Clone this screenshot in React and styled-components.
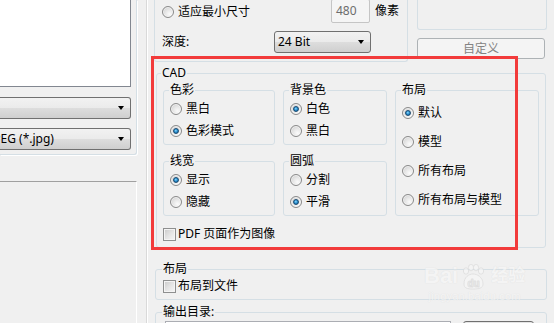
import React from 'react';
import styled, { createGlobalStyle, css } from 'styled-components';

// ========== Global ==========
const GlobalStyle = createGlobalStyle`
  html, body {
    margin: 0;
    padding: 0;
    background: #f0f0f0;
  }
  body {
    font-family: 'Noto Sans', 'Noto Sans CJK SC', sans-serif;
    font-size: 12px;
    color: #000;
  }
`;

// ========== Frame ==========
const Screen = styled.div`
  position: relative;
  width: 554px;
  height: 323px;
  overflow: hidden;
  display: flex;
  background: #f0f0f0;
  line-height: 14px;
`;

const LeftPanel = styled.div`
  width: 147px;
  flex: none;
  box-sizing: border-box;
  border-right: 1px solid #d9d9d9;
  display: flex;
  flex-direction: column;
`;

const LeftGroup = styled.div`
  width: 137px;
  height: 155px;
  box-sizing: border-box;
  border-right: 1px solid #d5dfe5;
  border-bottom: 1px solid #d5dfe5;
  border-bottom-right-radius: 3px;
  box-shadow: 1px 1px 0 #fff;
  display: flex;
  flex-direction: column;
  gap: 9px;
`;

const ListBox = styled.div`
  width: 131px;
  height: 87px;
  box-sizing: border-box;
  background: #fff;
  border-right: 1px solid #828790;
  border-bottom: 1px solid #828790;
  margin-bottom: 1px;
`;

const SunkenPanel = styled.div`
  margin-top: 26px;
  width: 137px;
  flex: 1;
  box-sizing: border-box;
  border-top: 1px solid #a0a0a0;
  border-right: 1px solid #fff;
`;

const MainPanel = styled.div`
  flex: 1;
  border-left: 1px solid #fff;
  padding: 0 7px 0 7px;
  display: flex;
  flex-direction: column;
  min-width: 0;
`;

// ========== Controls ==========
const Combo = styled.div`
  width: ${p => p.$w}px;
  height: 22px;
  box-sizing: border-box;
  border: 1px solid #707070;
  border-radius: 3px;
  ${p => p.$cut && css`
    border-left: none;
    border-top-left-radius: 0;
    border-bottom-left-radius: 0;
  `}
  background: linear-gradient(#f2f2f2 0%, #ebebeb 48%, #dddddd 52%, #cfcfcf 100%);
  display: flex;
  align-items: center;
  padding-left: 3px;
  padding-right: 6px;
  white-space: nowrap;
  overflow: hidden;
`;

const ComboText = styled.span`
  flex: 1;
  margin-left: ${p => p.$shift || 0}px;
`;

const Arrow = styled.span`
  flex: none;
  width: 0;
  height: 0;
  border-left: 3.5px solid transparent;
  border-right: 3.5px solid transparent;
  border-top: 4px solid #000;
`;

const Radio = styled.span`
  position: relative;
  flex: none;
  width: 12px;
  height: 12px;
  box-sizing: border-box;
  border-radius: 50%;
  border: 1px solid #8a8a8a;
  background: radial-gradient(circle at 65% 70%, #fbfbfb 0%, #e6e6e6 45%, #c8c8c8 100%);
  box-shadow: inset 0 0 0 1px rgba(255, 255, 255, 0.6);
  ${p => p.$checked && css`
    &::after {
      content: '';
      position: absolute;
      left: 2px;
      top: 2px;
      width: 6px;
      height: 6px;
      border-radius: 50%;
      box-sizing: border-box;
      border: 1px solid #19496f;
      background: radial-gradient(circle at 45% 40%, #8fdcff 0%, #2d93d3 45%, #0f5a92 100%);
    }
  `}
`;

const Check = styled.span`
  flex: none;
  width: 13px;
  height: 13px;
  box-sizing: border-box;
  border: 1px solid #8e8f8f;
  background: linear-gradient(135deg, #c9c9c9 0%, #e4e4e4 50%, #f6f6f6 100%);
  box-shadow: inset 0 0 0 1px #f4f4f4;
`;

const Option = styled.label`
  display: flex;
  align-items: center;
  gap: ${p => (p.$box ? 2 : 4)}px;
  height: 18px;
  white-space: nowrap;
  width: ${p => (p.$w ? `${p.$w}px` : 'auto')};
`;

const TextBox = styled.div`
  width: 39px;
  height: 24px;
  margin-top: -1px;
  box-sizing: border-box;
  border: 1px solid #c5c5c5;
  border-radius: 2px;
  background: #f5f5f5;
  color: #6d6d6d;
  display: flex;
  align-items: center;
  padding-left: 4px;
`;

const Button = styled.div`
  height: 21px;
  box-sizing: border-box;
  border: 1px solid #adb2b5;
  border-radius: 3px;
  background: #f4f4f4;
  color: #838383;
  display: flex;
  align-items: center;
  justify-content: center;
  width: ${p => p.$w}px;
`;

// ========== Top area ==========
const TopArea = styled.div`
  display: flex;
  height: 62px;
  flex: none;
  margin-left: -1px;
`;

const TopGroup = styled.div`
  width: 256px;
  height: 62px;
  box-sizing: border-box;
  border: 1px solid #d5dfe5;
  border-top: none;
  border-radius: 0 0 3px 3px;
  padding-left: 7px;
  display: flex;
  flex-direction: column;
  gap: 8px;
`;

const FieldRow = styled.div`
  display: flex;
  align-items: center;
  height: ${p => p.$h}px;
`;

const Unit = styled.span`
  margin-left: 5px;
  align-self: flex-start;
  margin-top: 4px;
`;

const FieldLabel = styled.span`
  width: 112px;
`;

const SideColumn = styled.div`
  margin-left: 9px;
  display: flex;
  flex-direction: column;
  gap: 8px;
`;

const SideBox = styled.div`
  width: 130px;
  height: 30px;
  box-sizing: border-box;
  border: 1px solid #d5dfe5;
  border-top: none;
  border-radius: 0 0 3px 3px;
`;

// ========== Group boxes ==========
const Group = styled.fieldset`
  margin: ${p => p.$m || '0'};
  padding: ${p => p.$p || '0 6px'};
  border: 1px solid #d5dfe5;
  border-radius: 3px;
  min-width: 0;
  ${p => p.$span && css`grid-row: span 2;`}
`;

const Legend = styled.legend`
  padding: 0 1px;
  margin-left: ${p => p.$ml ?? -1}px;
  line-height: 14px;
`;

const CadGrid = styled.div`
  display: grid;
  grid-template-columns: 112px 104px 144px;
  column-gap: 8px;
  row-gap: 9px;
  padding-top: 3px;
`;

const OptionList = styled.div`
  display: flex;
  flex-direction: column;
  gap: ${p => p.$gap}px;
  padding: ${p => p.$pt}px 0 4px;
`;

const PdfRow = styled.div`
  margin-top: 9px;
  padding-bottom: 4px;
`;

const OutRow = styled.div`
  display: flex;
  gap: 12px;
  padding: 2px 0 0 2px;
`;

const OutInput = styled.div`
  width: 286px;
  height: 20px;
  box-sizing: border-box;
  border: 1px solid #abadb3;
  background: #fff;
`;

const OutButton = styled.div`
  width: 71px;
  height: 20px;
  box-sizing: border-box;
  border: 1px solid #707070;
  border-radius: 3px;
  background: #e5e5e5;
`;

// ========== Overlays ==========
const Highlight = styled.div`
  position: absolute;
  left: 151px;
  top: 56px;
  width: 367px;
  height: 194px;
  box-sizing: border-box;
  border: 3px solid #f23b3b;
  pointer-events: none;
`;

const Watermark = styled.div`
  position: absolute;
  left: 424px;
  top: 264px;
  display: flex;
  flex-direction: column;
  align-items: center;
  color: #f7f7f7;
  opacity: 0.7;
  text-shadow: 0 0 1px #d6d6d6;
  font-family: 'Liberation Sans', 'Noto Sans CJK SC', sans-serif;
  pointer-events: none;
`;

const MarkTop = styled.div`
  display: flex;
  align-items: flex-end;
  font-size: 22px;
  font-weight: bold;
  line-height: 24px;
`;

const MarkCn = styled.span`
  font-size: 17px;
  margin-left: 3px;
`;

const MarkUrl = styled.div`
  font-size: 11px;
  line-height: 12px;
  margin-top: 2px;
  letter-spacing: 0.2px;
`;

const Paw = () => (
  <svg width="28" height="26" viewBox="0 0 28 26" style={{ margin: '0 1px -2px' }}>
    <g fill="#f7f7f7" stroke="#d6d6d6" strokeWidth="0.8">
      <ellipse cx="7" cy="7" rx="2.6" ry="3.2" />
      <ellipse cx="12" cy="3.6" rx="2.6" ry="3.2" />
      <ellipse cx="17" cy="3.6" rx="2.6" ry="3.2" />
      <ellipse cx="22" cy="7" rx="2.6" ry="3.2" />
      <path d="M5 20 C5 13 10 10 14 10 C18 10 24 13 24 20 C24 24 20 25 14 25 C8 25 5 24 5 20 Z" />
    </g>
    <text x="14.5" y="22.5" textAnchor="middle" fontSize="10" fontWeight="bold"
      fill="#f7f7f7" stroke="#d6d6d6" strokeWidth="0.5" fontFamily="Liberation Sans, sans-serif">du</text>
  </svg>
);

// ========== Main Component ==========
const App = () => {
  return (
    <>
      <GlobalStyle />
      <Screen>
        <LeftPanel>
          <LeftGroup>
            <ListBox />
            <Combo $w={131} $cut>
              <ComboText />
              <Arrow />
            </Combo>
            <Combo $w={131} $cut>
              <ComboText $shift={-13}>JPEG (*.jpg)</ComboText>
              <Arrow />
            </Combo>
          </LeftGroup>
          <SunkenPanel />
        </LeftPanel>

        <MainPanel>
          <TopArea>
            <TopGroup>
              <FieldRow $h={23}>
                <Option $w={169}>
                  <Radio />
                  适应最小尺寸
                </Option>
                <TextBox>480</TextBox>
                <Unit>像素</Unit>
              </FieldRow>
              <FieldRow $h={22}>
                <FieldLabel>深度:</FieldLabel>
                <Combo $w={97}>
                  <ComboText>24 Bit</ComboText>
                  <Arrow />
                </Combo>
              </FieldRow>
            </TopGroup>
            <SideColumn>
              <SideBox />
              <Button $w={128}>自定义</Button>
            </SideColumn>
          </TopArea>

          <Group $m="4px 1px 0" $p="0 6px">
            <Legend $ml={-2}>CAD</Legend>
            <CadGrid>
              <Group>
                <Legend>色彩</Legend>
                <OptionList $gap={4} $pt={3}>
                  <Option><Radio />黑白</Option>
                  <Option><Radio $checked />色彩模式</Option>
                </OptionList>
              </Group>
              <Group>
                <Legend>背景色</Legend>
                <OptionList $gap={4} $pt={3}>
                  <Option><Radio $checked />白色</Option>
                  <Option><Radio />黑白</Option>
                </OptionList>
              </Group>
              <Group $span>
                <Legend>布局</Legend>
                <OptionList $gap={11} $pt={7}>
                  <Option><Radio $checked />默认</Option>
                  <Option><Radio />模型</Option>
                  <Option><Radio />所有布局</Option>
                  <Option><Radio />所有布局与模型</Option>
                </OptionList>
              </Group>
              <Group>
                <Legend>线宽</Legend>
                <OptionList $gap={4} $pt={3}>
                  <Option><Radio $checked />显示</Option>
                  <Option><Radio />隐藏</Option>
                </OptionList>
              </Group>
              <Group>
                <Legend>圆弧</Legend>
                <OptionList $gap={4} $pt={3}>
                  <Option><Radio />分割</Option>
                  <Option><Radio $checked />平滑</Option>
                </OptionList>
              </Group>
            </CadGrid>
            <PdfRow>
              <Option $box><Check />PDF 页面作为图像</Option>
            </PdfRow>
          </Group>

          <Group $m="14px 0 0" $p="1px 7px 4px">
            <Legend>布局</Legend>
            <Option $box><Check />布局到文件</Option>
          </Group>

          <Group $m="5px 0 0" $p="0 7px">
            <Legend>输出目录:</Legend>
            <OutRow>
              <OutInput />
              <OutButton />
            </OutRow>
          </Group>
        </MainPanel>

        <Highlight />
        <Watermark>
          <MarkTop>
            Bai<Paw /><MarkCn>经验</MarkCn>
          </MarkTop>
          <MarkUrl>jingyan.baidu.com</MarkUrl>
        </Watermark>
      </Screen>
    </>
  );
};

export default App;
